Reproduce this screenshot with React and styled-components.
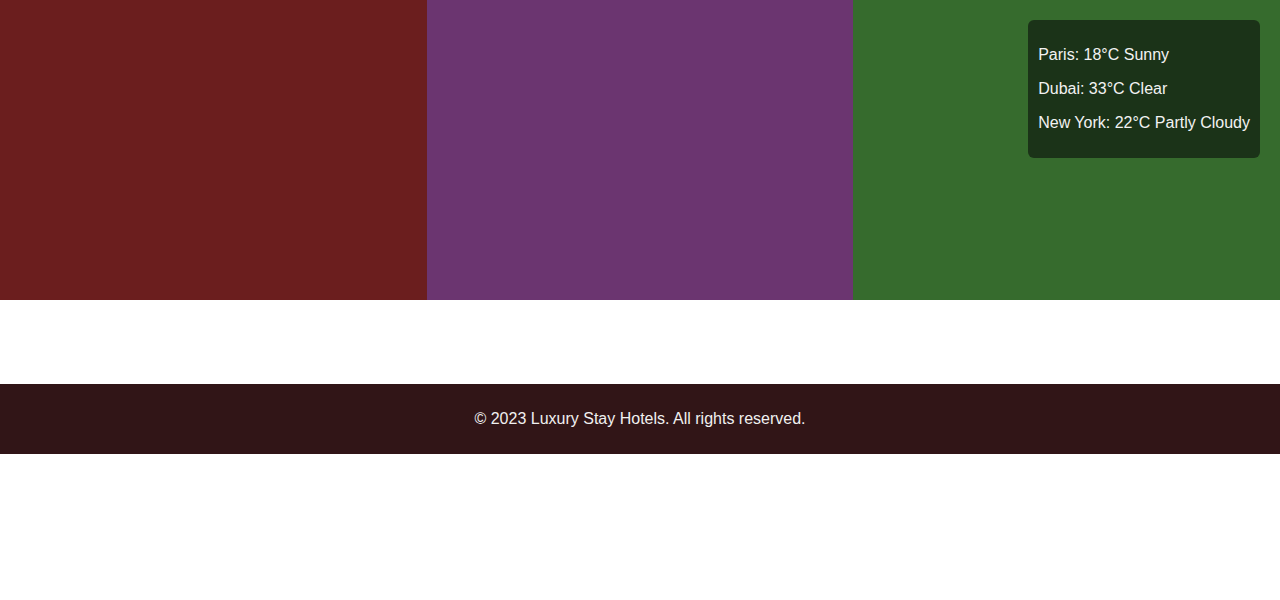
import styled, { createGlobalStyle } from "styled-components";

const Global = createGlobalStyle`
  body {
    margin: 0;
    font-family: "Liberation Sans", Arial, sans-serif;
    background: #fff;
  }
`;

const Hero = styled.div`
  position: relative;
  display: grid;
  grid-template-columns: repeat(3, 1fr);
  height: 300px;
`;

const Panel = styled.div`
  background: ${(p) => p.$color};
`;

const Weather = styled.div`
  position: absolute;
  top: 20px;
  right: 20px;
  padding: 10px;
  background: #1b3318;
  color: #f2f2f2;
  border-radius: 6px;
  font-size: 16px;

  p {
    margin: 16px 0;
    line-height: 18px;
  }
`;

const Spacer = styled.section`
  height: 84px;
`;

const Footer = styled.footer`
  background: #311517;
  color: #f0f0f0;
  text-align: center;
  padding: 26px 0;
  font-size: 16px;
  line-height: 18px;
`;

const cities = [
  "Paris: 18°C Sunny",
  "Dubai: 33°C Clear",
  "New York: 22°C Partly Cloudy",
];

export default function App() {
  return (
    <>
      <Global />
      <Hero>
        <Panel $color="#6b1e1e" />
        <Panel $color="#6b3570" />
        <Panel $color="#366b2d" />
        <Weather>
          {cities.map((c) => (
            <p key={c}>{c}</p>
          ))}
        </Weather>
      </Hero>
      <Spacer />
      <Footer>© 2023 Luxury Stay Hotels. All rights reserved.</Footer>
    </>
  );
}
